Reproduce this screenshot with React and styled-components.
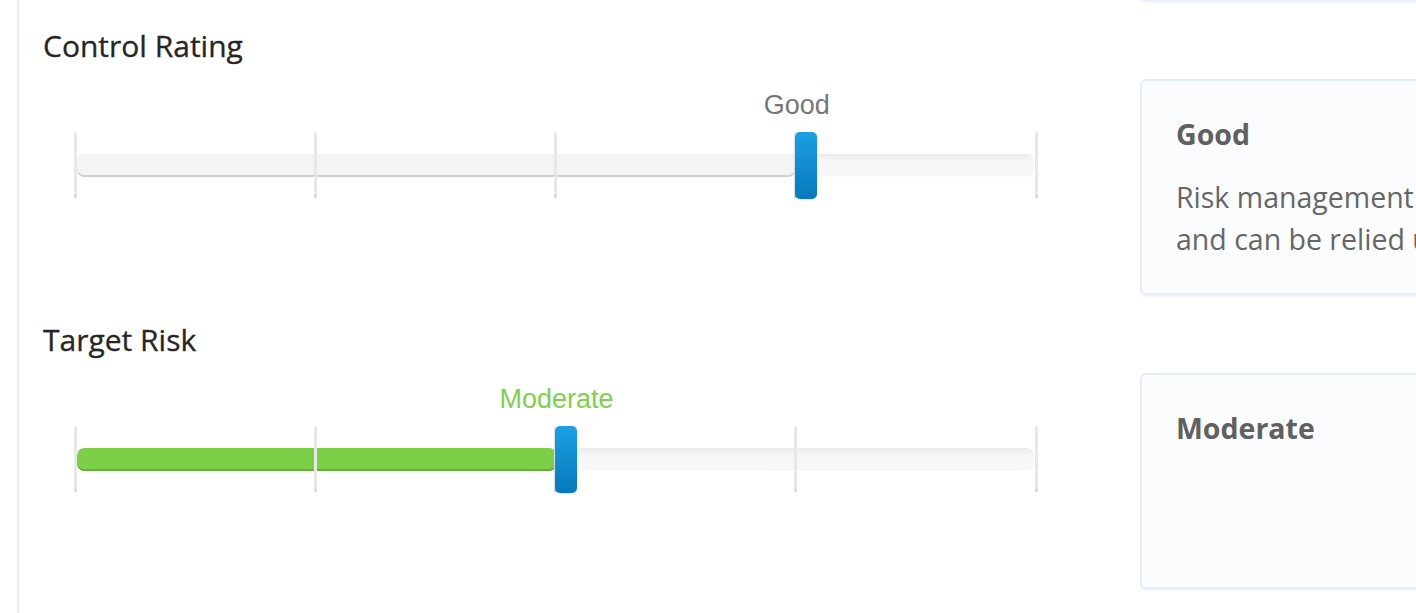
import React from 'react'
import styled, { createGlobalStyle } from 'styled-components'

const GlobalStyle = createGlobalStyle`
  html, body {
    margin: 0;
    padding: 0;
    background: #fff;
    overflow: hidden;
  }
  body {
    font-family: "Open Sans", "Liberation Sans", sans-serif;
  }
`

const CONTROL_LEVELS = ['Poor', 'Weak', 'Fair', 'Good', 'Strong']
const RISK_LEVELS = ['Very Low', 'Low', 'Moderate', 'High', 'Very High']

const sections = [
  {
    title: 'Control Rating',
    levels: CONTROL_LEVELS,
    value: 3,
    labelColor: '#777777',
    fill: '#f4f4f4',
    fillEdge: '#d0d0d0',
    heading: 'Good',
    body: ['Risk management controls are effective', 'and can be relied upon.'],
  },
  {
    title: 'Target Risk',
    levels: RISK_LEVELS,
    value: 2,
    labelColor: '#7fd04c',
    fill: '#7ecf48',
    fillEdge: '#62b136',
    heading: 'Moderate',
    body: null,
  },
]

function RatingSlider({ levels, value, labelColor, fill, fillEdge }) {
  const steps = levels.length - 1
  const pct = (value / steps) * 100

  return (
    <Rail>
      <Track>
        <Fill $color={fill} $edge={fillEdge} style={{ width: `${pct}%` }} />
      </Track>
      {levels.map((level, i) => (
        <Tick key={level} style={{ left: `${(i / steps) * 100}%` }} />
      ))}
      <ValueLabel $color={labelColor} style={{ left: `${pct}%` }}>
        {levels[value]}
      </ValueLabel>
      <Handle style={{ left: `${pct}%` }} />
    </Rail>
  )
}

export default function App() {
  return (
    <>
      <GlobalStyle />
      <Page>
        <Pane>
          {/* bottom of the previous section's card, scrolled above */}
          <Row>
            <div />
            <Card $tail />
          </Row>
          {sections.map((s) => (
            <Section key={s.title}>
              <Title>{s.title}</Title>
              <Row $spaced>
                <SliderCell>
                  <RatingSlider {...s} />
                </SliderCell>
                <Card>
                  <CardHeading>{s.heading}</CardHeading>
                  {s.body && (
                    <CardText>
                      {s.body[0]}
                      <br />
                      {s.body[1]}
                    </CardText>
                  )}
                </Card>
              </Row>
            </Section>
          ))}
        </Pane>
      </Page>
    </>
  )
}

const Page = styled.div`
  width: 1800px;
  height: 613px;
  padding-left: 17px;
  box-sizing: border-box;
  overflow: hidden;
`

const Pane = styled.div`
  border-left: 2px solid #e3eef9;
  padding-left: 24px;
  height: 100%;
  display: flex;
  flex-direction: column;
  gap: 27px;
`

const Section = styled.section`
  display: flex;
  flex-direction: column;
`

const Title = styled.h2`
  margin: 0;
  font-size: 30px;
  line-height: 36px;
  font-weight: 400;
  color: #262626;
  -webkit-text-stroke: 0.3px #262626;
`

const Row = styled.div`
  display: grid;
  grid-template-columns: 1097px 560px;
  margin-top: ${(p) => (p.$spaced ? '15px' : '0')};
`

const SliderCell = styled.div`
  padding: 53px 0 0 32px;
`

const Rail = styled.div`
  position: relative;
  width: 961px;
  height: 67px;
`

const Track = styled.div`
  position: absolute;
  top: 22px;
  left: 2px;
  right: 2px;
  height: 23px;
  border-radius: 7px;
  background: linear-gradient(#ebebeb, #f6f6f6 30%, #f8f8f8);
  overflow: hidden;
`

const Fill = styled.div`
  height: 100%;
  border-radius: 7px;
  background: ${(p) => p.$color};
  box-shadow: inset 0 -2px 0 ${(p) => p.$edge};
`

const Tick = styled.div`
  position: absolute;
  top: 0;
  width: 3px;
  height: 66px;
  margin-left: -1.5px;
  border-radius: 2px;
  background: linear-gradient(#e8e8e8 94%, #cbcbcb);
`

const ValueLabel = styled.div`
  position: absolute;
  top: -42px;
  margin-left: 1px;
  transform: translateX(-50%);
  font-family: "Liberation Sans", Arial, sans-serif;
  font-size: 27px;
  line-height: 30px;
  white-space: nowrap;
  color: ${(p) => p.$color};
`

const Handle = styled.div`
  position: absolute;
  top: 0;
  width: 22px;
  height: 67px;
  margin-left: -1px;
  border-radius: 5px;
  background: linear-gradient(#1ba0e3, #0779bc);
  box-shadow: 0 1px 2px rgba(0, 0, 0, 0.15);
`

const Card = styled.div`
  box-sizing: border-box;
  height: 216px;
  margin-top: ${(p) => (p.$tail ? '-215px' : '0')};
  padding: 33px 34px;
  border: 2px solid #e4eef9;
  border-radius: 6px;
  background: #fbfcfe;
  box-shadow: 0 2px 3px rgba(0, 0, 0, 0.05);
`

const CardHeading = styled.h3`
  margin: 0;
  font-size: 28.5px;
  line-height: 40px;
  font-weight: 700;
  color: #606060;
`

const CardText = styled.p`
  margin: 22px 0 0;
  font-size: 28.5px;
  line-height: 42px;
  white-space: nowrap;
  color: #666;
`
